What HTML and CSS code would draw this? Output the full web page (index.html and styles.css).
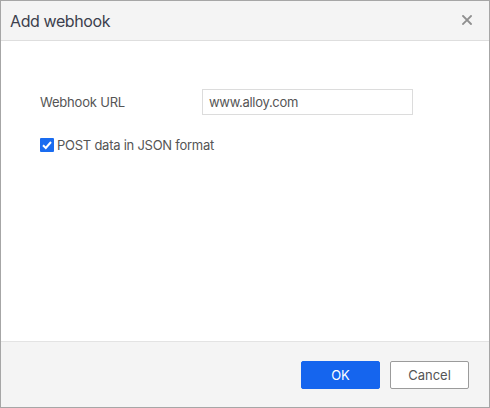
FILE: index.html
```html
<!DOCTYPE html>
<html>
<head>
<meta charset="utf-8">
<link rel="stylesheet" href="styles.css">
</head>
<body>
<div class="dialog">
  <div class="header">
    <span class="title">Add webhook</span>
    <span class="close">
      <svg width="10" height="10" viewBox="0 0 10 10"><path d="M1 1L9 9M9 1L1 9" stroke="#8f8f8f" stroke-width="1.8" stroke-linecap="square"/></svg>
    </span>
  </div>
  <div class="body">
    <div class="row">
      <label class="label">Webhook URL</label>
      <div class="input">www.alloy.com</div>
    </div>
    <div class="check-row">
      <span class="checkbox">
        <svg width="14" height="14" viewBox="0 0 14 14"><path d="M3 7.2L5.8 10L11 4" fill="none" stroke="#fff" stroke-width="2"/></svg>
      </span>
      <span class="check-label">POST data in JSON format</span>
    </div>
  </div>
  <div class="footer">
    <button class="btn btn-primary">OK</button>
    <button class="btn btn-default">Cancel</button>
  </div>
</div>
</body>
</html>
```
FILE: styles.css
```css
html, body {
  margin: 0;
  padding: 0;
  background: #fff;
}
body {
  font-family: Inter, "Noto Sans", sans-serif;
  color: #555;
}
.dialog {
  width: 490px;
  height: 408px;
  box-sizing: border-box;
  border: 1px solid #a6a6a6;
  display: flex;
  flex-direction: column;
}
.header {
  height: 39px;
  background: #f4f4f4;
  border-bottom: 1px solid #dedede;
  display: flex;
  align-items: center;
  justify-content: space-between;
  padding: 0 17px 0 9px;
  flex-shrink: 0;
}
.title {
  font-size: 16px;
  letter-spacing: -0.4px;
  color: #3c3f4d;
}
.close {
  display: flex;
  margin-top: -2px;
}
.body {
  flex: 1;
  padding: 48px 0 0 39px;
}
.row {
  display: flex;
  align-items: center;
}
.label {
  width: 162px;
  font-size: 13px;
  letter-spacing: -0.2px;
  color: #555;
  margin-top: -1px;
}
.input {
  width: 203px;
  height: 24px;
  border: 1px solid #dcdcdc;
  padding-left: 6px;
  font-size: 13px;
  letter-spacing: -0.3px;
  line-height: 24px;
  color: #555;
}
.check-row {
  display: flex;
  align-items: center;
  margin-top: 22px;
}
.checkbox {
  width: 14px;
  height: 14px;
  background: #1a6cf0;
  border-radius: 1px;
  display: flex;
  margin-right: 3px;
}
.check-label {
  font-size: 13px;
  letter-spacing: -0.25px;
  color: #555;
}
.footer {
  height: 65px;
  background: #f4f4f4;
  border-top: 1px solid #e3e3e3;
  display: flex;
  justify-content: flex-end;
  align-items: center;
  gap: 10px;
  padding-right: 20px;
  flex-shrink: 0;
}
.btn {
  width: 79px;
  height: 28px;
  font-family: Inter, "Noto Sans", sans-serif;
  font-size: 13px;
  border-radius: 2px;
  cursor: pointer;
  margin-top: 1px;
}
.btn-primary {
  background: #1565ee;
  border: 1px solid #1565ee;
  color: #fff;
}
.btn-default {
  background: #fff;
  border: 1px solid #9b9b9b;
  color: #555;
}
```
